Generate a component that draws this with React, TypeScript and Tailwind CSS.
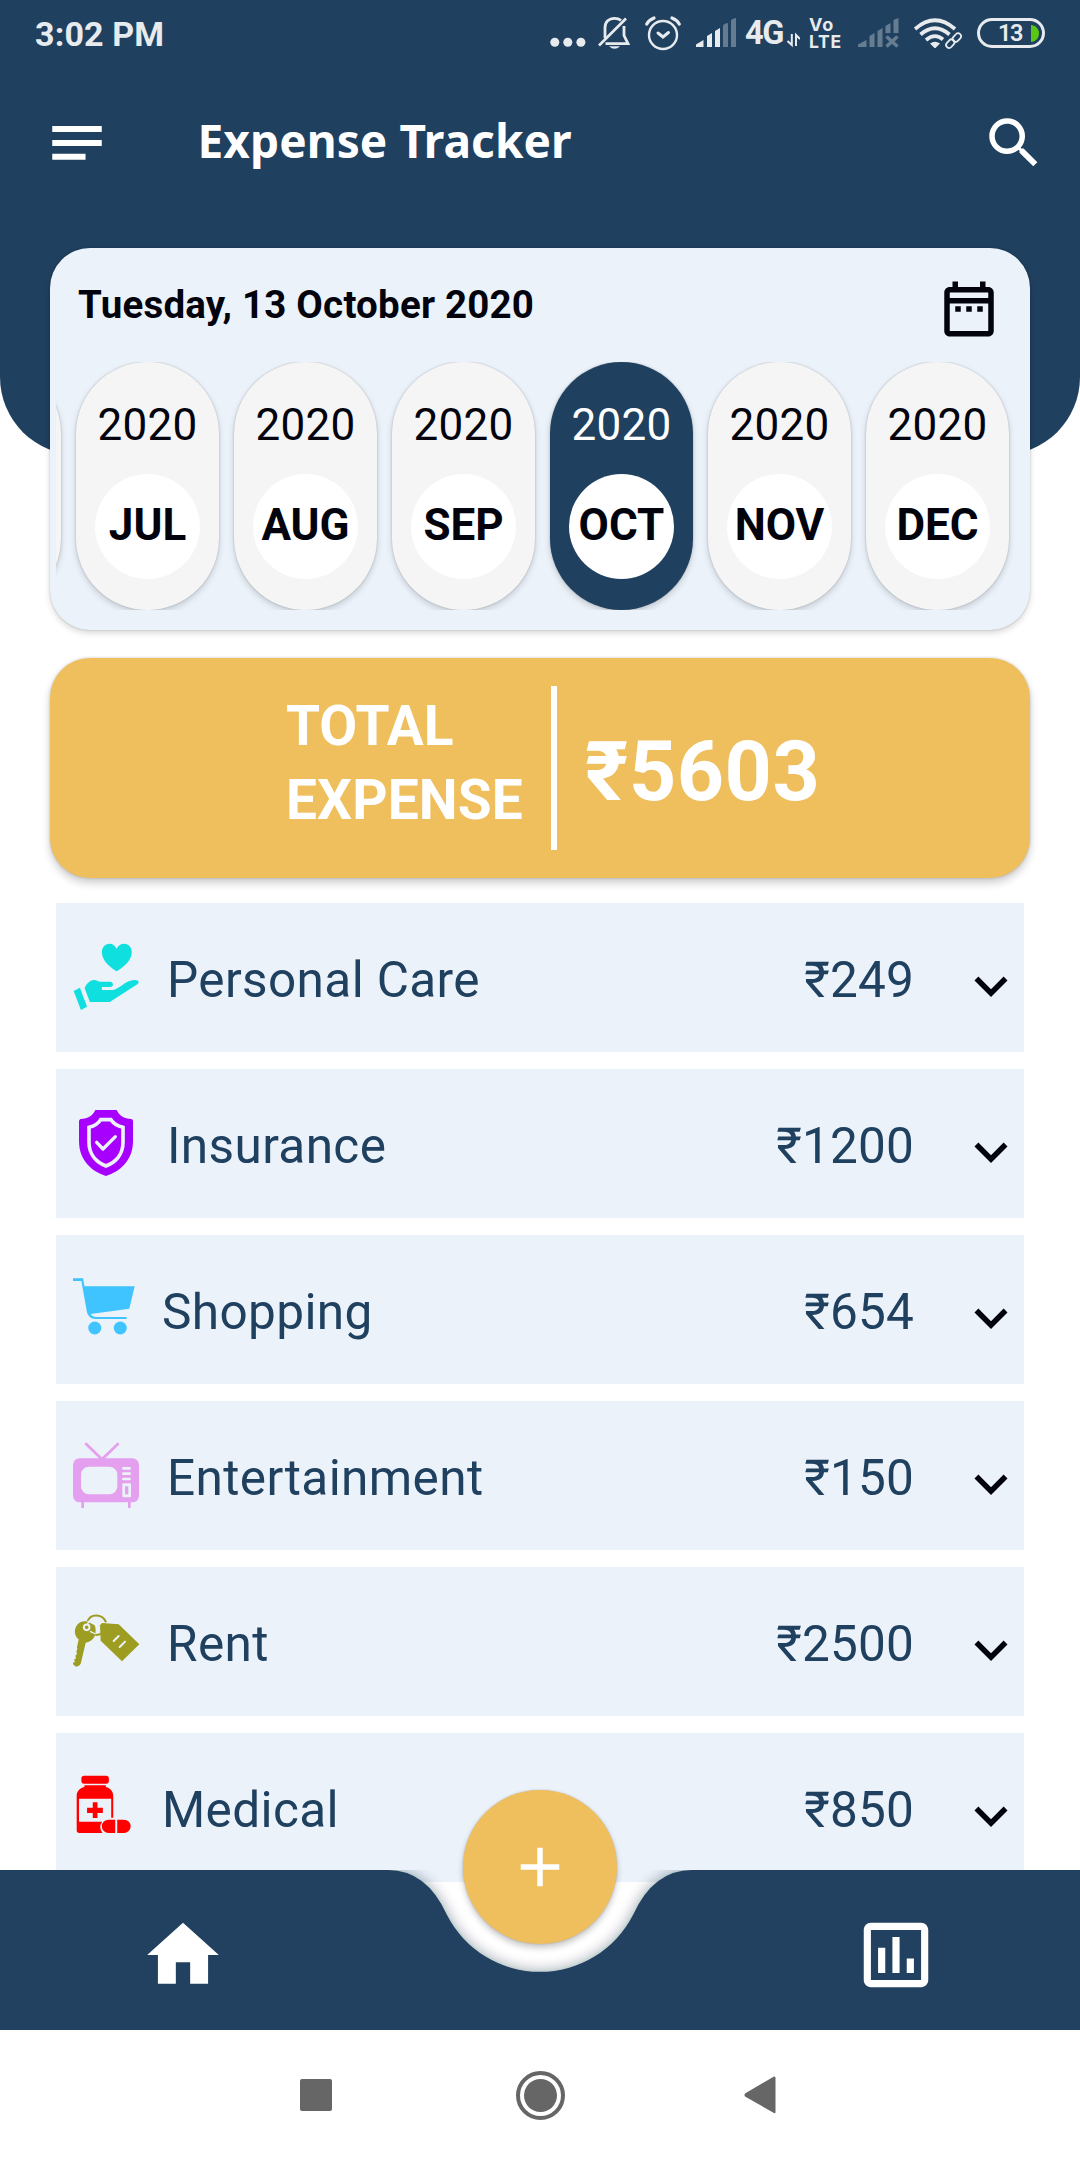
import React from "react";

const NAVY = "#20405f";

type Category = {
  name: string;
  amount: string;
  color: string;
  viewBox: string;
  compact?: boolean;
  icon: React.ReactNode;
};

const CARD_BG = "#ebf2fa";

const categories: Category[] = [
  {
    name: "Personal Care",
    amount: "₹249",
    color: "#0fdfdf",
    viewBox: "212 912 192 198",
    icon: (
      <>
        <path d="M339 994C328 987 296 966 296 937C296 922 305 911 318 911C328 911 335 917 339 926C343 917 350 911 361 911C374 911 383 922 383 937C383 966 350 987 339 994Z" />
        <path d="M214 1053L232 1043L253 1100L235 1110Z" />
        <path d="M261 1086L246 1045C250 1032 260 1021 273 1020C281 1020 285 1025 292 1025H320C331 1026 331 1040 320 1041H296V1050H327C345 1047 358 1029 378 1022C392 1018 403 1020 403 1027C402 1032 397 1035 390 1039L319 1086Z" />
      </>
    ),
  },
  {
    name: "Insurance",
    amount: "₹1200",
    color: "#a800ff",
    viewBox: "99 150 198 198",
    icon: (
      <>
        <path d="M166 150H230C238 166 251 177 274 177Q279 178 279 183V243C279 302 239 335 198 348C157 335 117 302 117 243V183Q118 178 122 177C145 177 158 166 166 150Z" />
        <path
          d="M182 179H213C221 191 232 198 249 202V247C249 286 224 308 198 318C172 308 147 286 147 247V202C163 198 175 191 182 179Z"
          fill="none"
          stroke={CARD_BG}
          strokeWidth="11"
        />
        <path
          d="M170 247L189 267L226 230"
          fill="none"
          stroke={CARD_BG}
          strokeWidth="10"
          strokeLinecap="round"
          strokeLinejoin="round"
        />
      </>
    ),
  },
  {
    name: "Shopping",
    amount: "₹654",
    color: "#40c4ff",
    viewBox: "99 648 182 198",
    compact: true,
    icon: (
      <>
        <path d="M99 655H129L133 679H283L267 746L152 762Q156 770 168 771H259V777H165Q147 776 141 758L124 663H99Z" />
        <circle cx="164" cy="804" r="19.500" />
        <circle cx="240" cy="804" r="19.500" />
      </>
    ),
  },
  {
    name: "Entertainment",
    amount: "₹150",
    color: "#e49fee",
    viewBox: "99 186 198 198",
    icon: (
      <>
        <path
          d="M136 190L186 238L236 190M128 362V384M268 362V384"
          fill="none"
          stroke="#e49fee"
          strokeWidth="8"
        />
        <rect x="99" y="235" width="198" height="132" rx="20" />
        <rect x="123" y="260" width="109" height="83" rx="24" fill={CARD_BG} />
        <path
          d="M250 265H269M250 281H269M250 297H269"
          stroke={CARD_BG}
          strokeWidth="8"
          strokeLinecap="round"
        />
        <rect x="247" y="310" width="26" height="42" rx="3" fill={CARD_BG} />
        <rect x="255" y="319" width="10" height="24" />
      </>
    ),
  },
  {
    name: "Rent",
    amount: "₹2500",
    color: "#9d9d22",
    viewBox: "99 684 198 198",
    icon: (
      <>
        <path d="M116 778C104 769 102 752 108 740C115 727 127 722 140 724L163 735C168 742 168 756 165 765C162 777 151 786 137 788L123 848Q120 858 108 860L99 853V848L105 846L102 839L108 835L106 827L111 822L109 814L112 808L111 802Z" />
        <path d="M150 756C164 769 178 766 190 758M143 723C153 699 189 702 198 727" fill="none" stroke="#9d9d22" strokeWidth="6" />
        <path d="M186 729L236 733L298 793L246 844L182 782L180 736Z" />
        <circle cx="140" cy="742" r="8.500" fill="none" stroke={CARD_BG} strokeWidth="6" />
        <path d="M142 734L147 722M150 754L167 762" stroke={CARD_BG} strokeWidth="4" />
        <path d="M221 783L236 768M239 801L255 785" stroke={CARD_BG} strokeWidth="6" strokeLinecap="round" />
      </>
    ),
  },
  {
    name: "Medical",
    amount: "₹850",
    color: "#ff0000",
    viewBox: "99 1182 182 198",
    compact: true,
    icon: (
      <>
        <rect x="124" y="1187" width="82" height="24" rx="8" />
        <path d="M133 1216H197V1221C211 1225 219 1234 219 1248V1313H213V1256H117V1325H186Q174 1342 187 1359H118Q110 1359 110 1351V1248C110 1234 118 1225 133 1221Z" />
        <path d="M158 1267H172V1283H188V1299H172V1314H158V1299H141V1283H158Z" />
        <path d="M225 1319H205A20 20 0 0 0 205 1359H225ZM231 1319H251A20 20 0 0 1 251 1359H231Z" />
      </>
    ),
  },
];

const months = ["JUL", "AUG", "SEP", "OCT", "NOV", "DEC"];

function StatusBar() {
  return (
    <div className="flex h-[66px] items-start pl-[35px] pr-[35px] text-[#e8ebee]">
      <span className="mt-[14px] text-[34px] leading-[40px] font-bold tracking-[0.150px] whitespace-nowrap">3:02 PM</span>
      <div className="mt-[15px] ml-auto flex h-9 items-start">
        <svg className="mr-[12px] h-9 w-[36px]" viewBox="549.500 15 36 36" fill="currentColor">
          <circle cx="554.300" cy="42.300" r="4.500" />
          <circle cx="567.300" cy="42.300" r="4.500" />
          <circle cx="580.400" cy="42.300" r="4.500" />
        </svg>
        <svg className="mr-[14px] h-9 w-[33px]" viewBox="597.500 15 33 36" fill="none" stroke="currentColor" strokeWidth="2.800">
          <path d="M598.500 45.500L625.500 18.500" strokeWidth="2.600" />
          <path d="M604.500 38V27.500C604.500 22 608.500 18.300 614 18.300C616.500 18.300 618.800 19 620.500 20.300M623.500 26V35.500L627.500 43.700H605" />
          <path d="M608.500 46.200H619.500Q614 51.500 608.500 46.200Z" fill="currentColor" stroke="none" />
        </svg>
        <svg className="mr-[15px] h-9 w-[36px]" viewBox="645 15 36 36" fill="none" stroke="currentColor" strokeLinecap="round">
          <circle cx="663" cy="35" r="14" strokeWidth="2.400" />
          <path d="M658 33L663 37L668.500 32.500" strokeWidth="3" />
          <path d="M646.800 24Q649 20 654 18M679.200 24Q677 20 672 18" strokeWidth="3.200" />
        </svg>
        <svg className="h-9 w-[41px]" viewBox="696 15 41 36" fill="currentColor">
          <path d="M696 47V44.500L703.500 40V47ZM707 47V36L712 33V47ZM715 47V31L720 28V47Z" />
          <path d="M723 47V26Q723 24 728 23V47ZM731 47V21Q731 19 736 18V47Z" opacity=".35" />
        </svg>
        <span className="mt-[-1px] ml-[8px] w-[40px] text-[32.500px] leading-[38px] font-bold tracking-[-1.500px]">4G</span>
        <svg className="mr-[9px] ml-[2px] h-9 w-[13px]" viewBox="787 15 13 36" fill="none" stroke="currentColor" strokeWidth="2">
          <path d="M791.800 34V45L787.500 41M796 46V35L800 39" />
        </svg>
        <div className="mt-px flex w-[37px] flex-col font-['Inter'] text-[17px] leading-[17px] font-bold">
          <span className="text-[18px] tracking-[1px]">Vo</span>
          <span className="text-[17.500px] tracking-[0.800px]">LTE</span>
        </div>
        <svg className="ml-[12px] h-9 w-[41px]" viewBox="857.500 15 41 36" fill="currentColor" opacity=".35">
          <path d="M857.500 47V44.500L866 40V47ZM869 47V36L874 33V47ZM877 47V31L882 28V47ZM885 33V26L890 23V33ZM893 33V20L898 18V33Z" />
          <path d="M886 36.500L897 46.500M897 36.500L886 46.500" stroke="currentColor" strokeWidth="3.500" />
        </svg>
        <svg className="ml-[15px] h-9 w-[48px]" viewBox="914 15 48 36" fill="none" stroke="currentColor" strokeWidth="3.700">
          <path d="M915 29Q935 11.500 955 29" />
          <path d="M920.500 34.500Q935 22 949.500 34.500" />
          <path d="M926 40Q935 32.500 943 39.500" />
          <path d="M930 43.500Q935 40 940 43.500L936 47.500Q935 48.500 934 47.500Z" fill="currentColor" stroke="none" />
          <g strokeWidth="1.800">
            <rect x="-3" y="-6" width="6" height="9.500" rx="3" transform="translate(956 38.500) rotate(43)" />
            <rect x="-3" y="-4.500" width="6" height="9.500" rx="3" transform="translate(950.500 43.500) rotate(43)" />
          </g>
        </svg>
        <div className="mt-[3px] ml-[15px] flex h-[30px] w-[68px] items-center rounded-full border-[3px] border-[#e8ebee] pl-[18px]">
          <span className="w-[24px] text-[23.500px] leading-[24px] font-semibold tracking-[-1.500px]">13</span>
          <svg className="ml-[9px] h-[17px] w-[8px]" viewBox="0 0 8 17">
            <path d="M0 0H1Q8 2 8 8.500T1 17H0Z" fill="#58c814" />
          </svg>
        </div>
      </div>
    </div>
  );
}

function AppBar() {
  return (
    <div className="flex h-[154px] items-center pr-[33px] pl-[44px] text-white">
      <svg className="size-[66px]" viewBox="0 0 24 24" fill="currentColor">
        <path d="M3 4.900H21V7.050H3ZM3 9.950H21V12.100H3ZM3 15H15.100V17.150H3Z" transform="translate(0 .95)" />
      </svg>
      <h1 className="mt-[-6px] ml-[87.500px] font-['Noto_Sans'] text-[46px] leading-[60px] font-bold tracking-[0.080px] whitespace-nowrap">
        Expense Tracker
      </h1>
      <svg className="mt-[-1px] ml-auto size-[66px]" viewBox="0 0 24 24" fill="currentColor">
        <path d="M15.500 14h-.79l-.28-.27A6.471 6.471 0 0 0 16 9.500 6.500 6.500 0 1 0 9.500 16c1.610 0 3.090-.59 4.230-1.570l.27.28v.79l5 4.990L20.490 19l-4.990-5zm-6 0C7.010 14 5 11.990 5 9.500S7.010 5 9.500 5 14 7.010 14 9.500 11.990 14 9.500 14z" />
      </svg>
    </div>
  );
}

function MonthPill({ month, selected }: { month?: string; selected?: boolean }) {
  return (
    <div
      className={
        "flex h-[248px] w-[143px] shrink-0 flex-col items-center rounded-full pt-[37px] shadow-[0_3px_6px_rgba(0,0,0,0.16),0_0_2px_rgba(0,0,0,0.22)] " +
        (selected ? "bg-[#20405f] text-white" : "bg-[#f5f5f5] text-[#03030d]")
      }
    >
      {month && (
        <>
          <span className="text-[44px] leading-[52px] tracking-[0.3px]">2020</span>
          <span className="mt-[23px] flex size-[105px] items-center justify-center rounded-full bg-white pb-[3px] text-[44px] font-bold text-[#03030d]">
            {month}
          </span>
        </>
      )}
    </div>
  );
}

function DateCard() {
  return (
    <section className="relative mx-[50px] mt-[-207px] h-[382px] rounded-[40px] bg-[#ebf2fa] shadow-[0_3px_6px_rgba(0,0,0,0.16),0_0_2px_rgba(0,0,0,0.2)]">
      <div className="flex h-[114px] items-start justify-between pt-[28px] pr-[28px] pl-[28px]">
        <span className="mt-[6px] text-[38.500px] leading-[46px] font-bold tracking-[0.200px] whitespace-nowrap text-[#03030d]">
          Tuesday, 13 October 2020
        </span>
        <svg className="size-[66px]" viewBox="0 0 24 24" fill="#03030d">
          <path d="M7 11h2v2H7v-2zm14-5v14c0 1.100-.9 2-2 2H5c-1.110 0-2-.9-2-2l.01-14c0-1.100.88-2 1.990-2h1V2h2v2h8V2h2v2h1c1.100 0 2 .9 2 2zM5 8h14V6H5v2zm14 12V10H5v10h14zm-4-7h2v-2h-2v2zm-4 0h2v-2h-2v2z" />
        </svg>
      </div>
      <div className="mx-[6px] flex h-[248px] justify-end gap-[15px] overflow-hidden pr-[15px]">
        <MonthPill />
        {months.map((m) => (
          <MonthPill key={m} month={m} selected={m === "OCT"} />
        ))}
      </div>
    </section>
  );
}

function TotalCard() {
  return (
    <section className="mx-[50px] mt-[28px] flex h-[220px] rounded-[40px] bg-[#efbf5e] pt-[28px] pl-[236px] text-white shadow-[0_5px_9px_rgba(0,0,0,0.2),0_0_3px_rgba(0,0,0,0.18)]">
      <div className="mt-[3px] flex w-[237px] flex-col text-[55px] leading-[74px] font-bold">
        <span>TOTAL</span>
        <span className="tracking-[0.150px]">EXPENSE</span>
      </div>
      <div className="ml-[28px] h-[164px] w-[6px] bg-white" />
      <span className="mt-[38px] ml-[28px] text-[82.500px] leading-[96px] font-bold tracking-[0.500px] whitespace-nowrap">
        ₹5603
      </span>
    </section>
  );
}

function CategoryRow({ item }: { item: Category }) {
  return (
    <li className="flex h-[149px] shrink-0 items-center bg-[#ebf2fa] pr-0 pl-[17px] text-[49.500px] leading-[58px] text-[#20405f]">
      <svg
        className={
          item.compact
            ? "mt-[-1px] h-[66px] w-[61px] overflow-visible"
            : "mt-[-1px] h-[66px] w-[66px] overflow-visible"
        }
        viewBox={item.viewBox}
        preserveAspectRatio="none"
        fill={item.color}
      >
        {item.icon}
      </svg>
      <span className="ml-[28px] pt-[5px] tracking-[0.380px] whitespace-nowrap">{item.name}</span>
      <span className="ml-auto pt-[5px] tracking-[0.200px]">{item.amount}</span>
      <svg className="mt-[17px] ml-[44px] size-[66px]" viewBox="0 0 24 24" fill="#03030d">
        <path d="M16.590 8.590L12 13.170 7.410 8.590 6 10l6 6 6-6z" />
      </svg>
    </li>
  );
}

function BottomBar() {
  return (
    <div className="relative mt-[-12px] h-[160px] shrink-0">
      <svg className="absolute inset-0 h-[160px] w-[1080px] overflow-hidden" viewBox="0 1870 1080 160">
        <defs>
          <filter id="barShadow" x="-5%" y="-20%" width="110%" height="140%">
            <feDropShadow dx="0" dy="0" stdDeviation="7" floodColor="#0d2133" floodOpacity=".45" />
          </filter>
        </defs>
        <path
          d="M-40 1870H388Q426.700 1870 447 1915A104.500 104.500 0 0 0 633 1915Q653.300 1870 692 1870H1120V2070H-40Z"
          fill={NAVY}
          filter="url(#barShadow)"
        />
      </svg>
      <button className="absolute top-[-80px] left-[463px] flex size-[154px] items-center justify-center rounded-full bg-[#efbf5e] shadow-[0_4px_6px_rgba(0,0,0,0.22),0_0_2px_rgba(0,0,0,0.2)]">
        <svg className="size-[66px]" viewBox="0 0 24 24" fill="#fff">
          <path d="M19 13h-6v6h-2v-6H5v-2h6V5h2v6h6v2z" />
        </svg>
      </button>
      <div className="relative flex h-full items-center justify-between pt-[9px] pr-[141px] pl-[140px]">
        <svg className="size-[86px]" viewBox="0 0 24 24" fill="#fff">
          <path d="M10 20v-6h4v6h5v-8h3L12 3 2 12h3v8z" />
        </svg>
        <svg className="size-[86px]" viewBox="0 0 24 24" fill="#fff">
          <path d="M19 3H5c-1.100 0-2 .9-2 2v14c0 1.100.9 2 2 2h14c1.100 0 2-.9 2-2V5c0-1.100-.9-2-2-2zm0 16H5V5h14v14zM7 10h2v7H7zm4-3h2v10h-2zm4 6h2v4h-2z" />
        </svg>
      </div>
    </div>
  );
}

function SystemNav() {
  return (
    <div className="flex h-[130px] shrink-0 items-center bg-white pl-[300px]">
      <div className="size-[32px] rounded-[2px] bg-[#666]" />
      <div className="ml-[184px] flex size-[49px] items-center justify-center rounded-full border-4 border-[#666]">
        <div className="size-[33px] shrink-0 rounded-full bg-[#666]" />
      </div>
      <svg className="ml-[179px] h-[38px] w-[32px]" viewBox="0 0 32 38" fill="#666">
        <path d="M30 .5Q31.500 0 31.500 2V36Q31.500 38 30 37L1 20.500Q0 19 1 17.500Z" />
      </svg>
    </div>
  );
}

export default function App() {
  return (
    <div className="flex h-[2160px] w-[1080px] flex-col overflow-hidden bg-white font-['Roboto',sans-serif]">
      <header className="h-[455px] shrink-0 rounded-b-[78px] bg-[#20405f]">
        <StatusBar />
        <AppBar />
      </header>
      <DateCard />
      <TotalCard />
      <ul className="mx-[56px] mt-[25px] flex h-[979px] shrink-0 flex-col gap-[17px] overflow-hidden">
        {categories.map((c) => (
          <CategoryRow key={c.name} item={c} />
        ))}
      </ul>
      <BottomBar />
      <SystemNav />
    </div>
  );
}
